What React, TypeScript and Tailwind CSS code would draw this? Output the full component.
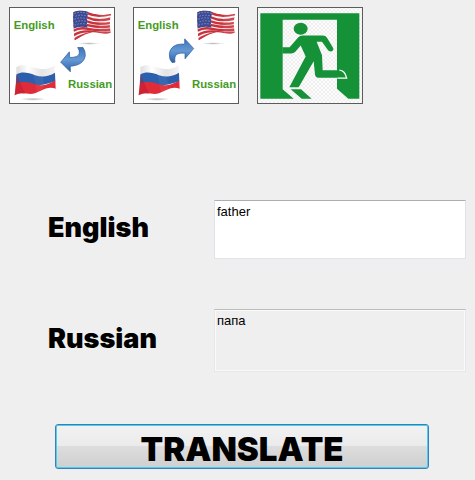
import { useState } from "react";

function UsFlag() {
  const wave = "c14,-6 28,-6 42,1 s34,12 72,3";
  return (
    <g>
      <ellipse cx="266" cy="128" rx="34" ry="4" fill="url(#shadow)" />
      <clipPath id="usShape">
        <path d="M219,34 C234,27 250,28 264,33 S302,47 333,39 Q325,60 331,96 C308,104 290,90 270,96 C250,101 236,112 223,119 Q217,78 219,34 Z" />
      </clipPath>
      <g clipPath="url(#usShape)">
        <rect x="210" y="20" width="130" height="105" fill="#faf3f3" />
        <g fill="none" stroke="#c8323c" strokeWidth="7">
          <path d={`M219,36 ${wave}`} />
          <path d={`M219,49 ${wave}`} />
          <path d="M219,62 c14,-6 28,-6 42,0 s38,9 72,4" />
          <path d="M219,76 c16,-8 30,-6 42,-3 s38,9 72,3" />
          <path d="M219,90 c16,-10 30,-9 44,-6 s38,6 70,2" />
          <path d="M219,104 c16,-11 30,-13 48,-12 s36,6 66,3" />
          <path d="M221,117 c16,-11 34,-17 50,-19" />
        </g>
        <path d="M216,30 Q240,24 264,33 Q258,55 261,80 Q238,74 219,84 Z" fill="#3c4a94" />
        <g stroke="#a9b3dc" strokeWidth="3" strokeDasharray="3 6" fill="none">
          <path d="M223,38 Q242,31 262,38" />
          <path d="M226,46 Q242,40 261,46" />
          <path d="M223,55 Q242,48 260,54" />
          <path d="M226,63 Q242,57 259,62" />
          <path d="M223,73 Q242,65 260,71" />
        </g>
        <path d="M300,30 H336 V105 H300 Q292,70 300,30 Z" fill="#fff" opacity=".1" />
      </g>
    </g>
  );
}

function RussianFlag() {
  return (
    <g>
      <ellipse cx="98" cy="295" rx="38" ry="5" fill="url(#shadow)" />
      <path d="M48,199 C66,187 86,196 104,201 S140,208 163,194 L164,218 Q110,240 48,222 Z" fill="url(#whiteBand)" />
      <path d="M48,221 C66,211 84,216 104,223 S142,229 164,216 L165,241 Q110,262 47,251 Z" fill="#2c5fac" />
      <path d="M47,248 C66,240 84,243 104,250 S142,253 165,239 L166,264 C142,252 116,275 98,279 C78,281 62,272 43,283 Z" fill="#e02c38" />
      <path d="M48,222 L75,279 Q58,275 43,283 Z" fill="#b5182c" opacity=".45" />
      <path d="M96,198 L126,206 L132,264 L110,276 Z" fill="#fff" opacity=".06" />
    </g>
  );
}

function DirectionPicture({ toRussian }: { toRussian: boolean }) {
  return (
    <svg viewBox="29 23 312 282" className="block h-full w-full" aria-hidden="true">
      <defs>
        <radialGradient id="shadow">
          <stop stopColor="#bbb" />
          <stop offset="1" stopColor="#fff" />
        </radialGradient>
        <linearGradient id="whiteBand">
          <stop stopColor="#dedede" />
          <stop offset=".3" stopColor="#fff" />
          <stop offset=".65" stopColor="#e3e3e3" />
          <stop offset="1" stopColor="#f4f4f4" />
        </linearGradient>
        <linearGradient id="arrow" x2="0" y2="1">
          <stop stopColor="#3d74b8" />
          <stop offset=".5" stopColor="#6499d5" />
          <stop offset="1" stopColor="#2d62a8" />
        </linearGradient>
      </defs>
      <text x="40" y="84" fontSize="34" className="fill-[#439b24] font-['Liberation_Sans',sans-serif] font-bold">English</text>
      <text x="203" y="263" fontSize="34" className="fill-[#439b24] font-['Liberation_Sans',sans-serif] font-bold">Russian</text>
      <UsFlag />
      <RussianFlag />
      {toRussian ? (
        <path d="M181,184 L207,153 L208,170 Q235,170 237,157 Q238,148 232,140 L248,140 Q256,151 255,164 C252,185 234,195 210,196 L210,213 Z" fill="url(#arrow)" stroke="#2c5b9b" strokeWidth="2" />
      ) : (
        <path d="M208,143 L181,114 L181,130 C154,128 138,138 135,159 Q134,176 143,185 L152,184 Q149,165 158,160 Q166,156 182,157 L182,174 Z" fill="url(#arrow)" stroke="#2c5b9b" strokeWidth="2" />
      )}
    </svg>
  );
}

function ExitPicture() {
  return (
    <svg viewBox="27 23 312 282" className="block h-full w-full" aria-hidden="true">
      <defs>
        <pattern id="checks" width="12" height="12" patternUnits="userSpaceOnUse">
          <rect width="12" height="12" fill="#fdfdfd" />
          <path d="M0,0h6v6h-6zM6,6h6v6h-6z" fill="#efefef" />
        </pattern>
      </defs>
      <rect x="20" y="20" width="325" height="290" fill="url(#checks)" />
      <g fill="#159137">
        <path d="M34,37 H331 V294 H298 L264,264 V57 H101 V265 L134,294 H34 Z" />
        <ellipse cx="155" cy="84" rx="21" ry="18" />
        <path d="M100,139 H122 L148,109 Q153,104 160,104 H221 Q230,104 234,111 L253,142 Q254,151 245,152 Q239,152 236,147 L219,123 H203 L219,163 L221,208 H271 Q286,211 291,231 H208 Q199,230 198,221 L194,181 L149,259 H121 L170,167 L155,134 L139,153 Q134,158 127,158 H100 Z" />
        <path d="M125,265 H156 L188,294 H158 Z" />
      </g>
      <path d="M271,208 Q288,209 293,232 H265" fill="none" stroke="#fff" strokeWidth="4" />
    </svg>
  );
}

const pictureButton = "h-[97px] w-[106px] border border-[#5c5c5c] bg-white";
const caption = "pb-1 font-['Inter','Liberation_Sans',sans-serif] text-[27px] leading-8 font-black";
const field =
  "block w-full resize-none border px-[2px] py-[3px] font-['Liberation_Sans',sans-serif] text-[13px] leading-4 text-black outline-none";

export default function App() {
  const [source, setSource] = useState("father");
  return (
    <main className="min-h-screen bg-[#efefef] pt-[7px] pb-2 text-black">
      <nav className="flex gap-[18px] pl-[9px]" aria-label="Actions">
        <button type="button" aria-label="English to Russian" className={pictureButton}>
          <DirectionPicture toRussian />
        </button>
        <button type="button" aria-label="Russian to English" className={pictureButton}>
          <DirectionPicture toRussian={false} />
        </button>
        <button type="button" aria-label="Exit" className={pictureButton}>
          <ExitPicture />
        </button>
      </nav>
      <form onSubmit={(e) => e.preventDefault()}>
        <div className="mt-24 grid grid-cols-[166px_1fr] items-center gap-y-[50px] pr-[9px] pl-12">
          <label htmlFor="english" className={caption}>English</label>
          <textarea
            id="english"
            value={source}
            onChange={(e) => setSource(e.target.value)}
            className={`${field} h-[59px] border-[#e2e3ea] border-t-[#abadb3] bg-white`}
          />
          <label htmlFor="russian" className={caption}>Russian</label>
          <textarea
            id="russian"
            readOnly
            value="папа"
            className={`${field} h-[63px] border-[#e4e6ea] border-t-[#bbbbbb] bg-[#efefef] shadow-[inset_0_0_0_1px_#fafafa]`}
          />
        </div>
        <div className="mt-[52px] pr-[46px] pl-[55px]">
          <button
            type="submit"
            className="flex h-[45px] w-full items-center justify-center rounded-[3px] border border-[#3c7fb1] bg-[linear-gradient(#f2f2f2,#ebebeb_48%,#dddddd_50%,#cfcfcf)] pt-1 font-['Inter','Liberation_Sans',sans-serif] text-[33px] leading-10 font-black shadow-[inset_0_0_0_1px_#48d0f4]"
          >
            TRANSLATE
          </button>
        </div>
      </form>
    </main>
  );
}
